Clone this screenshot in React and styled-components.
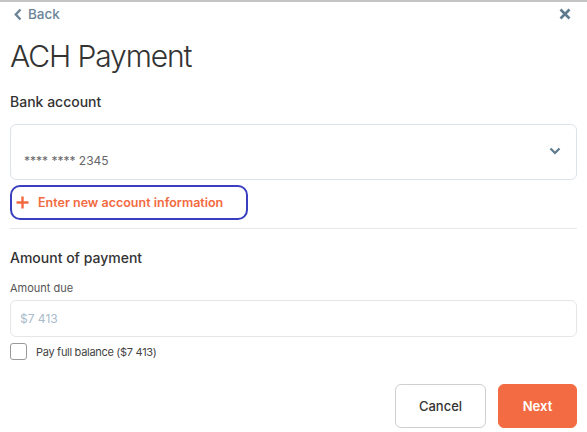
import React from 'react';
import styled, { createGlobalStyle } from 'styled-components';

const GlobalStyle = createGlobalStyle`
  html, body { margin: 0; padding: 0; background: #fff; }
  body { font-family: Inter, "Noto Sans", sans-serif; color: #333; }
`;

const Page = styled.div`
  width: 587px;
  height: 432px;
  box-sizing: border-box;
  border-top: 2px solid #c4c4c4;
  padding: 0 10px;
  display: flex;
  flex-direction: column;
`;

const TopBar = styled.div`
  display: flex;
  justify-content: space-between;
  align-items: center;
  height: 24px;
  padding-left: 4px;
  padding-right: 6px;
`;

const BackLink = styled.a`
  display: flex;
  align-items: center;
  gap: 6px;
  color: #6b8599;
  font-size: 13.5px;
  font-weight: 500;
  text-decoration: none;
`;

const Title = styled.h1`
  margin: 11px 0 0;
  font-size: 30px;
  font-weight: 300;
  color: #333;
  letter-spacing: -1.1px;
  line-height: 38px;
`;

const SectionTitle = styled.h2`
  margin: ${p => p.$top}px 0 0;
  font-size: 14px;
  font-weight: 500;
  color: #333;
  line-height: 18px;
`;

const SelectBox = styled.div`
  margin-top: 13px;
  height: 56px;
  box-sizing: border-box;
  border: 1px solid #dde3ea;
  border-radius: 6px;
  display: flex;
  align-items: flex-end;
  padding: 0 14px 11px 13px;
  position: relative;
`;

const Masked = styled.span`
  font-size: 12px;
  color: #666;
`;

const Chevron = styled.span`
  position: absolute;
  right: 15px;
  top: 22px;
  display: flex;
`;

const AddLink = styled.button`
  margin-top: 5px;
  align-self: flex-start;
  width: 238px;
  height: 35px;
  box-sizing: border-box;
  border: 2.5px solid #3a3fc0;
  border-radius: 10px;
  background: #fff;
  display: flex;
  align-items: center;
  gap: 9px;
  padding: 0 0 0 4px;
  color: #f26a3f;
  font-family: inherit;
  font-size: 12.5px;
  font-weight: 600;
`;

const Divider = styled.hr`
  margin: 8px 0 0;
  border: none;
  border-top: 1px solid #e8e8e8;
`;

const FieldLabel = styled.label`
  margin-top: 14px;
  font-size: 11px;
  color: #555;
  line-height: 14px;
`;

const Input = styled.div`
  margin-top: 5px;
  height: 37px;
  box-sizing: border-box;
  border: 1px solid #e6e6e6;
  border-radius: 6px;
  display: flex;
  align-items: center;
  padding-left: 9px;
  font-size: 12px;
  color: #a9bccb;
`;

const CheckRow = styled.div`
  margin-top: 6px;
  display: flex;
  align-items: center;
  gap: 9px;
  font-size: 11px;
  letter-spacing: -0.3px;
  color: #444;
`;

const Box = styled.span`
  width: 17px;
  height: 17px;
  box-sizing: border-box;
  border: 1px solid #999;
  border-radius: 3px;
`;

const Actions = styled.div`
  margin-top: 24px;
  display: flex;
  justify-content: flex-end;
  gap: 12px;
`;

const Button = styled.button`
  height: 44px;
  width: ${p => p.$w}px;
  box-sizing: border-box;
  border-radius: 6px;
  font-family: inherit;
  font-size: 13px;
  font-weight: ${p => (p.$primary ? 600 : 500)};
  border: 1px solid ${p => (p.$primary ? '#f26b43' : '#cfcfcf')};
  background: ${p => (p.$primary ? '#f26b43' : '#fff')};
  color: ${p => (p.$primary ? '#fff' : '#333')};
`;

export default function App() {
  return (
    <>
      <GlobalStyle />
      <Page>
        <TopBar>
          <BackLink href="#">
            <svg width="8" height="13" viewBox="0 0 8 13">
              <path d="M6.5 1.5 L1.8 6.5 L6.5 11.5" stroke="#6b8599" strokeWidth="2.4" fill="none" />
            </svg>
            Back
          </BackLink>
          <svg width="12" height="12" viewBox="0 0 12 12">
            <path d="M1.5 1.5 L10.5 10.5 M10.5 1.5 L1.5 10.5" stroke="#5d7a8f" strokeWidth="2.6" />
          </svg>
        </TopBar>
        <Title>ACH Payment</Title>
        <SectionTitle $top={18}>Bank account</SectionTitle>
        <SelectBox>
          <Masked>**** **** 2345</Masked>
          <Chevron>
            <svg width="12" height="8" viewBox="0 0 12 8">
              <path d="M1.5 1.5 L6 6 L10.5 1.5" stroke="#5d7a8f" strokeWidth="2.2" fill="none" />
            </svg>
          </Chevron>
        </SelectBox>
        <AddLink>
          <svg width="13" height="13" viewBox="0 0 13 13">
            <path d="M6.5 0.5 V12.5 M0.5 6.5 H12.5" stroke="#f26a3f" strokeWidth="2.4" />
          </svg>
          Enter new account information
        </AddLink>
        <Divider />
        <SectionTitle $top={20}>Amount of payment</SectionTitle>
        <FieldLabel>Amount due</FieldLabel>
        <Input>$7 413</Input>
        <CheckRow>
          <Box />
          Pay full balance ($7 413)
        </CheckRow>
        <Actions>
          <Button $w={91}>Cancel</Button>
          <Button $w={79} $primary>Next</Button>
        </Actions>
      </Page>
    </>
  );
}
